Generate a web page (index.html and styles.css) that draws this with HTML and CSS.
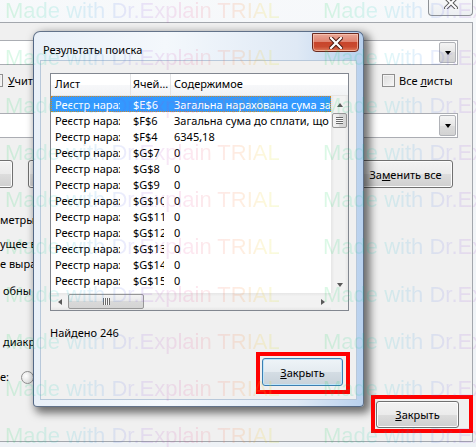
FILE: index.html
```html
<!DOCTYPE html>
<html>
<head>
<meta charset="utf-8">
<title>Результаты поиска</title>
<link rel="stylesheet" href="styles.css">
</head>
<body>
<div class="bgwin">
  <div class="bg-titlebar">
    <div class="bg-close">
      <svg width="14" height="12" viewBox="0 0 14 12"><path d="M2 1 L12 11 M12 1 L2 11" stroke="#5a5a5a" stroke-width="4" stroke-linecap="square" fill="none"/><path d="M2 1 L12 11 M12 1 L2 11" stroke="#ffffff" stroke-width="2" stroke-linecap="square" fill="none"/></svg>
    </div>
  </div>
  <div class="bg-client">
    <div class="combo combo1"><div class="combo-btn"><span class="tri"></span></div></div>
    <div class="row row-check">
      <div class="chk chk-left"><span class="box"></span><span class="lbl"><u>У</u>читывать регистр</span></div>
      <div class="chk chk-right"><span class="box"></span><span class="lbl">Все <u>л</u>исты</span></div>
    </div>
    <div class="combo combo2"><div class="combo-btn"><span class="tri"></span></div></div>
    <div class="row row-btns">
      <div class="left-btns"><span class="btn btn-a"></span><span class="btn btn-b"></span></div>
      <span class="btn btn-replace">За<u>м</u>енить все</span>
    </div>
    <div class="frag f1">метры</div>
    <div class="frag f2">ущее в</div>
    <div class="frag f3">е выра</div>
    <div class="frag f4">обны</div>
    <div class="frag f5">диакр</div>
    <div class="row row-radio"><span class="frag">е:</span><span class="radio"></span></div>
    <div class="row row-close"><span class="btn btn-close"><u>З</u>акрыть</span></div>
  </div>
</div>

<div class="dialog">
  <div class="dlg-title">
    <span class="dlg-caption">Результаты поиска</span>
    <div class="dlg-close">
      <svg width="14" height="12" viewBox="0 0 14 12"><path d="M2 1 L12 11 M12 1 L2 11" stroke="#4b1b12" stroke-width="4.2" stroke-linecap="square" fill="none"/><path d="M2 1 L12 11 M12 1 L2 11" stroke="#ffffff" stroke-width="2.2" stroke-linecap="square" fill="none"/></svg>
    </div>
  </div>
  <div class="dlg-client">
    <div class="list">
      <div class="lh">
        <div class="hc c1">Лист</div>
        <div class="hc c2">Ячейка</div>
        <div class="hc c3">Содержимое</div>
      </div>
      <div class="lbody">
        <div class="rows">
          <div class="r sel"><span class="c c1">Реєстр нарахувань</span><span class="c c2">$E$6</span><span class="c c3">Загальна нарахована сума за період</span></div>
          <div class="r"><span class="c c1">Реєстр нарахувань</span><span class="c c2">$F$6</span><span class="c c3">Загальна сума до сплати, що</span></div>
          <div class="r"><span class="c c1">Реєстр нарахувань</span><span class="c c2">$F$4</span><span class="c c3">6345,18</span></div>
          <div class="r"><span class="c c1">Реєстр нарахувань</span><span class="c c2">$G$7</span><span class="c c3">0</span></div>
          <div class="r"><span class="c c1">Реєстр нарахувань</span><span class="c c2">$G$8</span><span class="c c3">0</span></div>
          <div class="r"><span class="c c1">Реєстр нарахувань</span><span class="c c2">$G$9</span><span class="c c3">0</span></div>
          <div class="r"><span class="c c1">Реєстр нарахувань</span><span class="c c2">$G$10</span><span class="c c3">0</span></div>
          <div class="r"><span class="c c1">Реєстр нарахувань</span><span class="c c2">$G$11</span><span class="c c3">0</span></div>
          <div class="r"><span class="c c1">Реєстр нарахувань</span><span class="c c2">$G$12</span><span class="c c3">0</span></div>
          <div class="r"><span class="c c1">Реєстр нарахувань</span><span class="c c2">$G$13</span><span class="c c3">0</span></div>
          <div class="r"><span class="c c1">Реєстр нарахувань</span><span class="c c2">$G$14</span><span class="c c3">0</span></div>
          <div class="r"><span class="c c1">Реєстр нарахувань</span><span class="c c2">$G$15</span><span class="c c3">0</span></div>
          <div class="r"><span class="c c1">Реєстр нарахувань</span><span class="c c2">$G$16</span><span class="c c3">0</span></div>
        </div>
        <div class="vs">
          <div class="sb-btn"><span class="ar ar-up"></span></div>
          <div class="thumb-v"><span class="grip-v"></span></div>
          <div class="vs-track"></div>
          <div class="sb-btn"><span class="ar ar-down"></span></div>
        </div>
      </div>
      <div class="hrow">
        <div class="hs">
          <div class="sb-btn"><span class="ar ar-left"></span></div>
          <div class="thumb-h"><span class="grip-h"></span></div>
          <div class="hs-track"></div>
          <div class="sb-btn"><span class="ar ar-right"></span></div>
        </div>
        <div class="corner"></div>
      </div>
    </div>
    <div class="found">Найдено 246</div>
    <div class="dlg-footer"><span class="btn btn-default"><u>З</u>акрыть</span></div>
  </div>
</div>

<div class="mark mark-dlg"></div>
<div class="mark mark-bg"></div>

<div class="watermark">
  <div class="wm-row"><span class="wm">Made with Dr.Explain TRIAL</span><span class="wm">Made with Dr.Explain TRIAL</span></div>
  <div class="wm-row"><span class="wm">Made with Dr.Explain TRIAL</span><span class="wm">Made with Dr.Explain TRIAL</span></div>
  <div class="wm-row"><span class="wm">Made with Dr.Explain TRIAL</span><span class="wm">Made with Dr.Explain TRIAL</span></div>
  <div class="wm-row"><span class="wm">Made with Dr.Explain TRIAL</span><span class="wm">Made with Dr.Explain TRIAL</span></div>
  <div class="wm-row"><span class="wm">Made with Dr.Explain TRIAL</span><span class="wm">Made with Dr.Explain TRIAL</span></div>
  <div class="wm-row"><span class="wm">Made with Dr.Explain TRIAL</span><span class="wm">Made with Dr.Explain TRIAL</span></div>
  <div class="wm-row"><span class="wm">Made with Dr.Explain TRIAL</span><span class="wm">Made with Dr.Explain TRIAL</span></div>
  <div class="wm-row"><span class="wm">Made with Dr.Explain TRIAL</span><span class="wm">Made with Dr.Explain TRIAL</span></div>
  <div class="wm-row"><span class="wm">Made with Dr.Explain TRIAL</span><span class="wm">Made with Dr.Explain TRIAL</span></div>
  <div class="wm-row"><span class="wm">Made with Dr.Explain TRIAL</span><span class="wm">Made with Dr.Explain TRIAL</span></div>
</div>
</body>
</html>
```

FILE: styles.css
```css
* { box-sizing: border-box; }
html, body { margin: 0; padding: 0; }
body {
  width: 476px;
  height: 447px;
  overflow: hidden;
  position: relative;
  background: #f4f6f9;
  font-family: "Noto Sans", "DejaVu Sans", sans-serif;
  font-size: 11px;
  color: #000;
}
u { text-decoration: underline; text-underline-offset: 1px; }

/* ---------- background window ---------- */
.bgwin {
  position: absolute;
  left: -300px;
  top: -30px;
  width: 780px;
  height: 479px;
  padding: 0 7px 7px 7px;
  background: linear-gradient(#f7f9fb, #eef2f6);
  display: flex;
  flex-direction: column;
}
.bg-titlebar {
  height: 52px;
  flex: none;
  display: flex;
  justify-content: flex-end;
  align-items: flex-start;
}
.bg-close {
  margin-top: 24px;
  width: 45px;
  height: 22px;
  border: 1px solid #8d9196;
  border-top: none;
  border-radius: 0 0 4px 4px;
  background: linear-gradient(#fbfbfb, #eceff2);
  display: flex;
  justify-content: center;
  align-items: flex-start;
  padding-top: 3px;
}
.bg-client {
  height: 420px;
  flex: none;
  border: 1px solid #a3a7ad;
  background: #f0f0f0;
  padding: 0 14px 0 292px;
  display: flex;
  flex-direction: column;
}
.row { display: flex; align-items: center; }
.combo {
  height: 25px;
  margin-left: -20px;
  border: 1px solid #abadb3;
  background: #fff;
  padding: 1px;
  display: flex;
  justify-content: flex-end;
  flex: none;
}
.combo1 { margin-top: 17px; }
.combo2 { margin-top: 26px; }
.combo-btn {
  width: 17px;
  height: 100%;
  border: 1px solid #b1b3b8;
  border-radius: 2px;
  background: linear-gradient(#f4f4f4, #e6e6e6 50%, #dcdcdc 50%, #d2d2d2);
  display: flex;
  justify-content: center;
  align-items: center;
}
.tri {
  width: 0; height: 0;
  border-left: 3.5px solid transparent;
  border-right: 3.5px solid transparent;
  border-top: 4px solid #000;
}
.row-check { margin-top: 9px; height: 13px; justify-content: space-between; }
.chk { display: flex; align-items: center; gap: 4px; white-space: nowrap; line-height: 13px; }
.chk-left { margin-left: -10px; gap: 5px; }
.chk-right { width: 76px; }
.box {
  width: 13px; height: 13px; flex: none;
  border: 1px solid #8f8f8f;
  background: linear-gradient(135deg, #dcdcdc, #f7f7f7);
  box-shadow: inset 0 0 0 1px #f4f4f4;
}
.radio {
  width: 13px; height: 13px; flex: none;
  border: 1px solid #8f8f8f;
  border-radius: 50%;
  background: radial-gradient(circle at 40% 35%, #ffffff, #e3e3e3 70%);
}
.btn {
  display: flex;
  justify-content: center;
  align-items: center;
  border: 1px solid #707070;
  border-radius: 3px;
  background: linear-gradient(#f2f2f2, #ebebeb 50%, #dddddd 50%, #cfcfcf);
  box-shadow: inset 0 0 0 1px #fcfcfc;
  white-space: nowrap;
  flex: none;
}
.row-btns { margin-top: 22px; height: 28px; justify-content: space-between; }
.left-btns { display: flex; height: 28px; }
.btn-a { margin-left: -60px; width: 73px; height: 28px; }
.btn-b { margin-left: 15px; width: 80px; height: 28px; }
.btn-replace { width: 95px; height: 28px; margin-right: 5px; }
.frag { line-height: 15px; height: 15px; white-space: nowrap; flex: none; }
.f1 { margin-top: 24px; }
.f2 { margin-top: 9px; }
.f3 { margin-top: 5px; }
.f4 { margin-top: 12px; margin-left: 3px; }
.f5 { margin-top: 36px; margin-left: 3px; }
.row-radio { margin-top: 20px; height: 15px; gap: 12px; }
.row-radio .radio { margin-top: 2px; }
.row-close { margin-top: 17px; justify-content: flex-end; }
.btn-close { width: 83px; height: 27px; margin-right: -1px; }

/* ---------- results dialog ---------- */
.dialog {
  position: absolute;
  left: 33px;
  top: 31px;
  width: 331px;
  height: 376px;
  border: 1px solid rgba(40, 60, 90, 0.7);
  border-radius: 7px 7px 4px 4px;
  background: linear-gradient(90deg, #e9f0f8, #f4f8fc 40%, #dfe9f5 80%, #b9d1ee);
  padding: 0 6px 6px 6px;
  box-shadow: 4px 4px 8px 2px rgba(0, 0, 0, 0.55);
  display: flex;
  flex-direction: column;
}
.dlg-title {
  height: 28px;
  flex: none;
  display: flex;
  justify-content: space-between;
  align-items: flex-start;
}
.dlg-caption {
  margin-left: 3px;
  margin-top: 10px;
  line-height: 15px;
  white-space: nowrap;
}
.dlg-close {
  margin-top: 1px;
  margin-right: -2px;
  width: 47px;
  height: 19px;
  border: 1px solid #6a2a20;
  border-radius: 0 0 4px 4px;
  background: linear-gradient(#e9a898, #df8470 45%, #c8452b 50%, #c94a2f 75%, #df7d5d);
  box-shadow: inset 0 0 0 1px rgba(255, 210, 190, 0.6);
  display: flex;
  justify-content: center;
  align-items: center;
}
.dlg-client {
  flex: 1;
  background: #f0f0f0;
  border: 1px solid #b8c8da;
  display: flex;
  flex-direction: column;
}
.list {
  margin: 12px 0 0 9px;
  width: 299px;
  height: 238px;
  flex: none;
  border: 1px solid #828790;
  background: #fff;
  display: flex;
  flex-direction: column;
  overflow: hidden;
}
.lh {
  height: 22px;
  flex: none;
  display: flex;
  border-bottom: 1px solid #e5e5e5;
  background: linear-gradient(#ffffff, #ffffff 50%, #f7f8fa 50%, #f2f3f5);
}
.hc {
  line-height: 20px;
  white-space: nowrap;
  overflow: hidden;
  text-overflow: ellipsis;
  border-right: 1px solid #e3e4e6;
  flex: none;
}
.c1 { width: 80px; padding-left: 4px; }
.c2 { width: 40px; padding-left: 2px; }
.c3 { width: 200px; padding-left: 3px; }
.hc.c3 { border-right: none; flex: 1; }
.lbody { display: flex; height: 197px; flex: none; }
.rows { width: 280px; overflow: hidden; flex: none; }
.r { display: flex; height: 16px; line-height: 17px; white-space: nowrap; }
.r .c { overflow: hidden; flex: none; }
.r .c1 { clip-path: inset(0 11px 0 0); }
.r .c2 { clip-path: inset(0 7px 0 0); }
.r .c3 { flex: 1; }
.r.sel { background: #3399ff; color: #fff; outline: 1px dotted #c98a2a; outline-offset: -1px; }
.vs {
  width: 17px;
  flex: none;
  display: flex;
  flex-direction: column;
  background: linear-gradient(90deg, #e6e6e6, #f2f2f2 20%, #f2f2f2 80%, #e6e6e6);
}
.sb-btn {
  width: 17px; height: 17px; flex: none;
  display: flex; justify-content: center; align-items: center;
}
.vs-track, .hs-track { flex: 1; }
.ar { width: 0; height: 0; }
.ar-up { border-left: 3.5px solid transparent; border-right: 3.5px solid transparent; border-bottom: 4px solid #5a5a5a; }
.ar-down { border-left: 3.5px solid transparent; border-right: 3.5px solid transparent; border-top: 4px solid #5a5a5a; }
.ar-left { border-top: 3.5px solid transparent; border-bottom: 3.5px solid transparent; border-right: 4px solid #5a5a5a; }
.ar-right { border-top: 3.5px solid transparent; border-bottom: 3.5px solid transparent; border-left: 4px solid #5a5a5a; }
.thumb-v {
  height: 15px; margin: 0 1px; flex: none;
  border: 1px solid #979797;
  border-radius: 2px;
  background: linear-gradient(90deg, #f3f3f3, #e8e8e8 50%, #d9d9d9 50%, #d4d4d4);
  display: flex; justify-content: center; align-items: center;
}
.grip-v {
  width: 7px; height: 7px;
  background: repeating-linear-gradient(#6a6a6a 0 1px, #f8f8f8 1px 2px);
}
.hrow { display: flex; height: 17px; flex: none; }
.hs {
  width: 280px; flex: none; display: flex;
  background: linear-gradient(#e6e6e6, #f2f2f2 20%, #f2f2f2 80%, #e6e6e6);
}
.thumb-h {
  width: 76px; margin: 1px 0; flex: none;
  border: 1px solid #979797;
  border-radius: 2px;
  background: linear-gradient(#f3f3f3, #e8e8e8 50%, #d9d9d9 50%, #d4d4d4);
  display: flex; justify-content: center; align-items: center;
}
.grip-h {
  width: 7px; height: 7px;
  background: repeating-linear-gradient(90deg, #6a6a6a 0 1px, #f8f8f8 1px 2px);
}
.corner { width: 17px; flex: none; background: #f0f0f0; }
.found { margin: 14px 0 0 9px; line-height: 15px; height: 15px; }
.dlg-footer { display: flex; justify-content: flex-end; margin-top: 18px; padding-right: 13px; }
.btn-default {
  width: 81px; height: 28px;
  border-color: #3c7fb1;
  background: linear-gradient(#eef4f8, #e4ebf0 50%, #d4dde4 50%, #c8d2da);
  box-shadow: inset 0 0 0 1px #bfe6fb;
}

/* ---------- annotation frames ---------- */
.mark { position: absolute; border: 4px solid #ff0000; pointer-events: none; }
.mark-dlg { left: 256px; top: 352px; width: 94px; height: 42px; }
.mark-bg { left: 371px; top: 395px; width: 102px; height: 38px; }

/* ---------- watermark ---------- */
.watermark {
  position: absolute;
  left: 0;
  top: -13px;
  width: 476px;
  height: 470px;
  overflow: hidden;
  pointer-events: none;
  font-family: "Liberation Sans", Arial, sans-serif;
  font-size: 22px;
  line-height: 47.25px;
}
.wm-row { display: flex; height: 47.25px; padding-left: 5px; white-space: nowrap; }
.wm {
  flex: 0 0 318px;
  color: transparent;
  background: linear-gradient(90deg,
    rgba(0, 210, 70, 0.14) 0px,
    rgba(0, 200, 190, 0.13) 55px,
    rgba(40, 140, 230, 0.13) 95px,
    rgba(130, 80, 230, 0.13) 135px,
    rgba(230, 60, 150, 0.13) 180px,
    rgba(250, 120, 40, 0.14) 235px,
    rgba(240, 220, 30, 0.16) 262px,
    rgba(150, 230, 40, 0.15) 290px) 0 0 / 290px 100% no-repeat;
  -webkit-background-clip: text;
  background-clip: text;
}
```
